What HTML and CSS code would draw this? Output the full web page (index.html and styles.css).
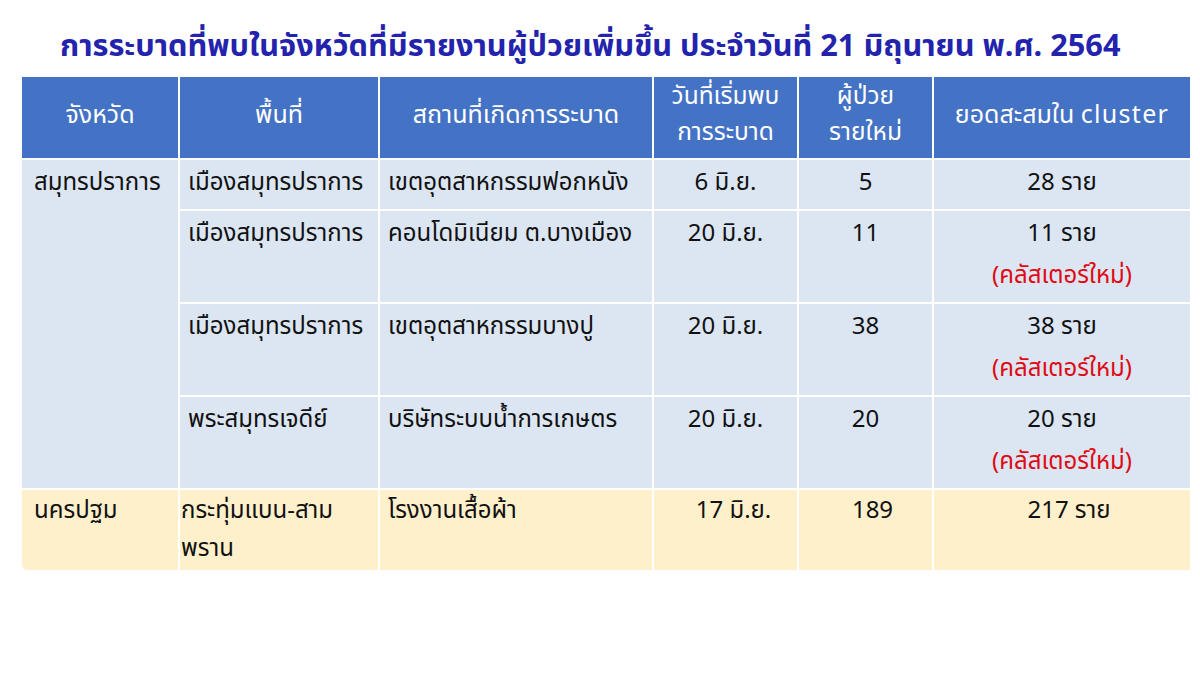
FILE: index.html
```html
<!DOCTYPE html>
<html lang="th">
<head>
<meta charset="utf-8">
<title>การระบาด</title>
<link rel="stylesheet" href="styles.css">
</head>
<body>
<h1 class="title">การระบาดที่พบในจังหวัดที่มีรายงานผู้ป่วยเพิ่มขึ้น ประจำวันที่ 21 มิถุนายน พ.ศ. 2564</h1>
<table class="grid">
  <colgroup>
    <col class="c1"><col class="c2"><col class="c3"><col class="c4"><col class="c5"><col class="c6">
  </colgroup>
  <thead>
    <tr class="head">
      <th class="one">จังหวัด</th>
      <th class="one">พื้นที่</th>
      <th class="one">สถานที่เกิดการระบาด</th>
      <th>วันที่เริ่มพบ<br>การระบาด</th>
      <th>ผู้ป่วย<br>รายใหม่</th>
      <th class="one">ยอดสะสมใน <span class="latin">cluster</span></th>
    </tr>
  </thead>
  <tbody>
    <tr class="blue r1">
      <td class="prov" rowspan="4">สมุทรปราการ</td>
      <td class="left">เมืองสมุทรปราการ</td>
      <td class="left">เขตอุตสาหกรรมฟอกหนัง</td>
      <td class="mid">6 มิ.ย.</td>
      <td class="mid">5</td>
      <td class="mid">28 ราย</td>
    </tr>
    <tr class="blue r2">
      <td class="left">เมืองสมุทรปราการ</td>
      <td class="left">คอนโดมิเนียม ต.บางเมือง</td>
      <td class="mid">20 มิ.ย.</td>
      <td class="mid">11</td>
      <td class="mid">11 ราย<br><span class="new">(คลัสเตอร์ใหม่)</span></td>
    </tr>
    <tr class="blue r2">
      <td class="left">เมืองสมุทรปราการ</td>
      <td class="left">เขตอุตสาหกรรมบางปู</td>
      <td class="mid">20 มิ.ย.</td>
      <td class="mid">38</td>
      <td class="mid">38 ราย<br><span class="new">(คลัสเตอร์ใหม่)</span></td>
    </tr>
    <tr class="blue r2">
      <td class="left">พระสมุทรเจดีย์</td>
      <td class="left">บริษัทระบบน้ำการเกษตร</td>
      <td class="mid">20 มิ.ย.</td>
      <td class="mid">20</td>
      <td class="mid">20 ราย<br><span class="new">(คลัสเตอร์ใหม่)</span></td>
    </tr>
    <tr class="yellow">
      <td class="left prov2">นครปฐม</td>
      <td class="left tight">กระทุ่มแบน-สาม<br>พราน</td>
      <td class="left">โรงงานเสื้อผ้า</td>
      <td class="mid shift">17 มิ.ย.</td>
      <td class="mid nudge">189</td>
      <td class="mid nudge">217 ราย</td>
    </tr>
  </tbody>
</table>
</body>
</html>
```
FILE: styles.css
```css
html, body {
  margin: 0;
  padding: 0;
  background: #ffffff;
}
body {
  font-family: "Noto Sans", "Noto Sans Thai", "Leelawadee UI", Tahoma, sans-serif;
  color: #111;
}
.title {
  margin: 0;
  padding: 22px 0 0 60px;
  height: 53px;
  box-sizing: content-box;
  font-size: 30.7px;
  font-weight: 700;
  line-height: 44px;
  color: #2323ad;
  white-space: nowrap;
}
.grid {
  margin: 0 0 0 20px;
  border-collapse: separate;
  border-spacing: 2px;
  table-layout: fixed;
  width: 1170px;
  font-size: 24px;
}
.c1 { width: 156px; }
.c2 { width: 198px; }
.c3 { width: 272px; }
.c4 { width: 143px; }
.c5 { width: 133px; }
.c6 { width: 256px; }
.grid th, .grid td {
  padding: 0;
  box-sizing: border-box;
  vertical-align: top;
}
.head th {
  background: #4472c4;
  color: #ffffff;
  font-weight: 400;
  font-size: 24.5px;
  height: 81px;
  line-height: 36px;
  text-align: center;
  padding-top: 0;
}
.head th.one {
  font-size: 25px;
  padding-top: 18px;
}
.latin { letter-spacing: 1.3px; }
.blue td {
  background: #dce6f3;
  line-height: 42px;
}
.r1 td { height: 49px; }
.r2 td { height: 91px; }
.yellow td {
  background: #fff0cc;
  height: 80px;
  line-height: 38px;
}
.yellow td:first-child { border-bottom-left-radius: 6px; }
.left { text-align: left; padding-left: 8px !important; }
.prov { text-align: left; padding-left: 12px !important; }
.prov2 { padding-left: 12px !important; }
.tight { padding-left: 1px !important; }
.mid { text-align: center; }
.shift { padding-left: 16px !important; }
.nudge { padding-left: 14px !important; }
.new {
  color: #e00a14;
}
```
